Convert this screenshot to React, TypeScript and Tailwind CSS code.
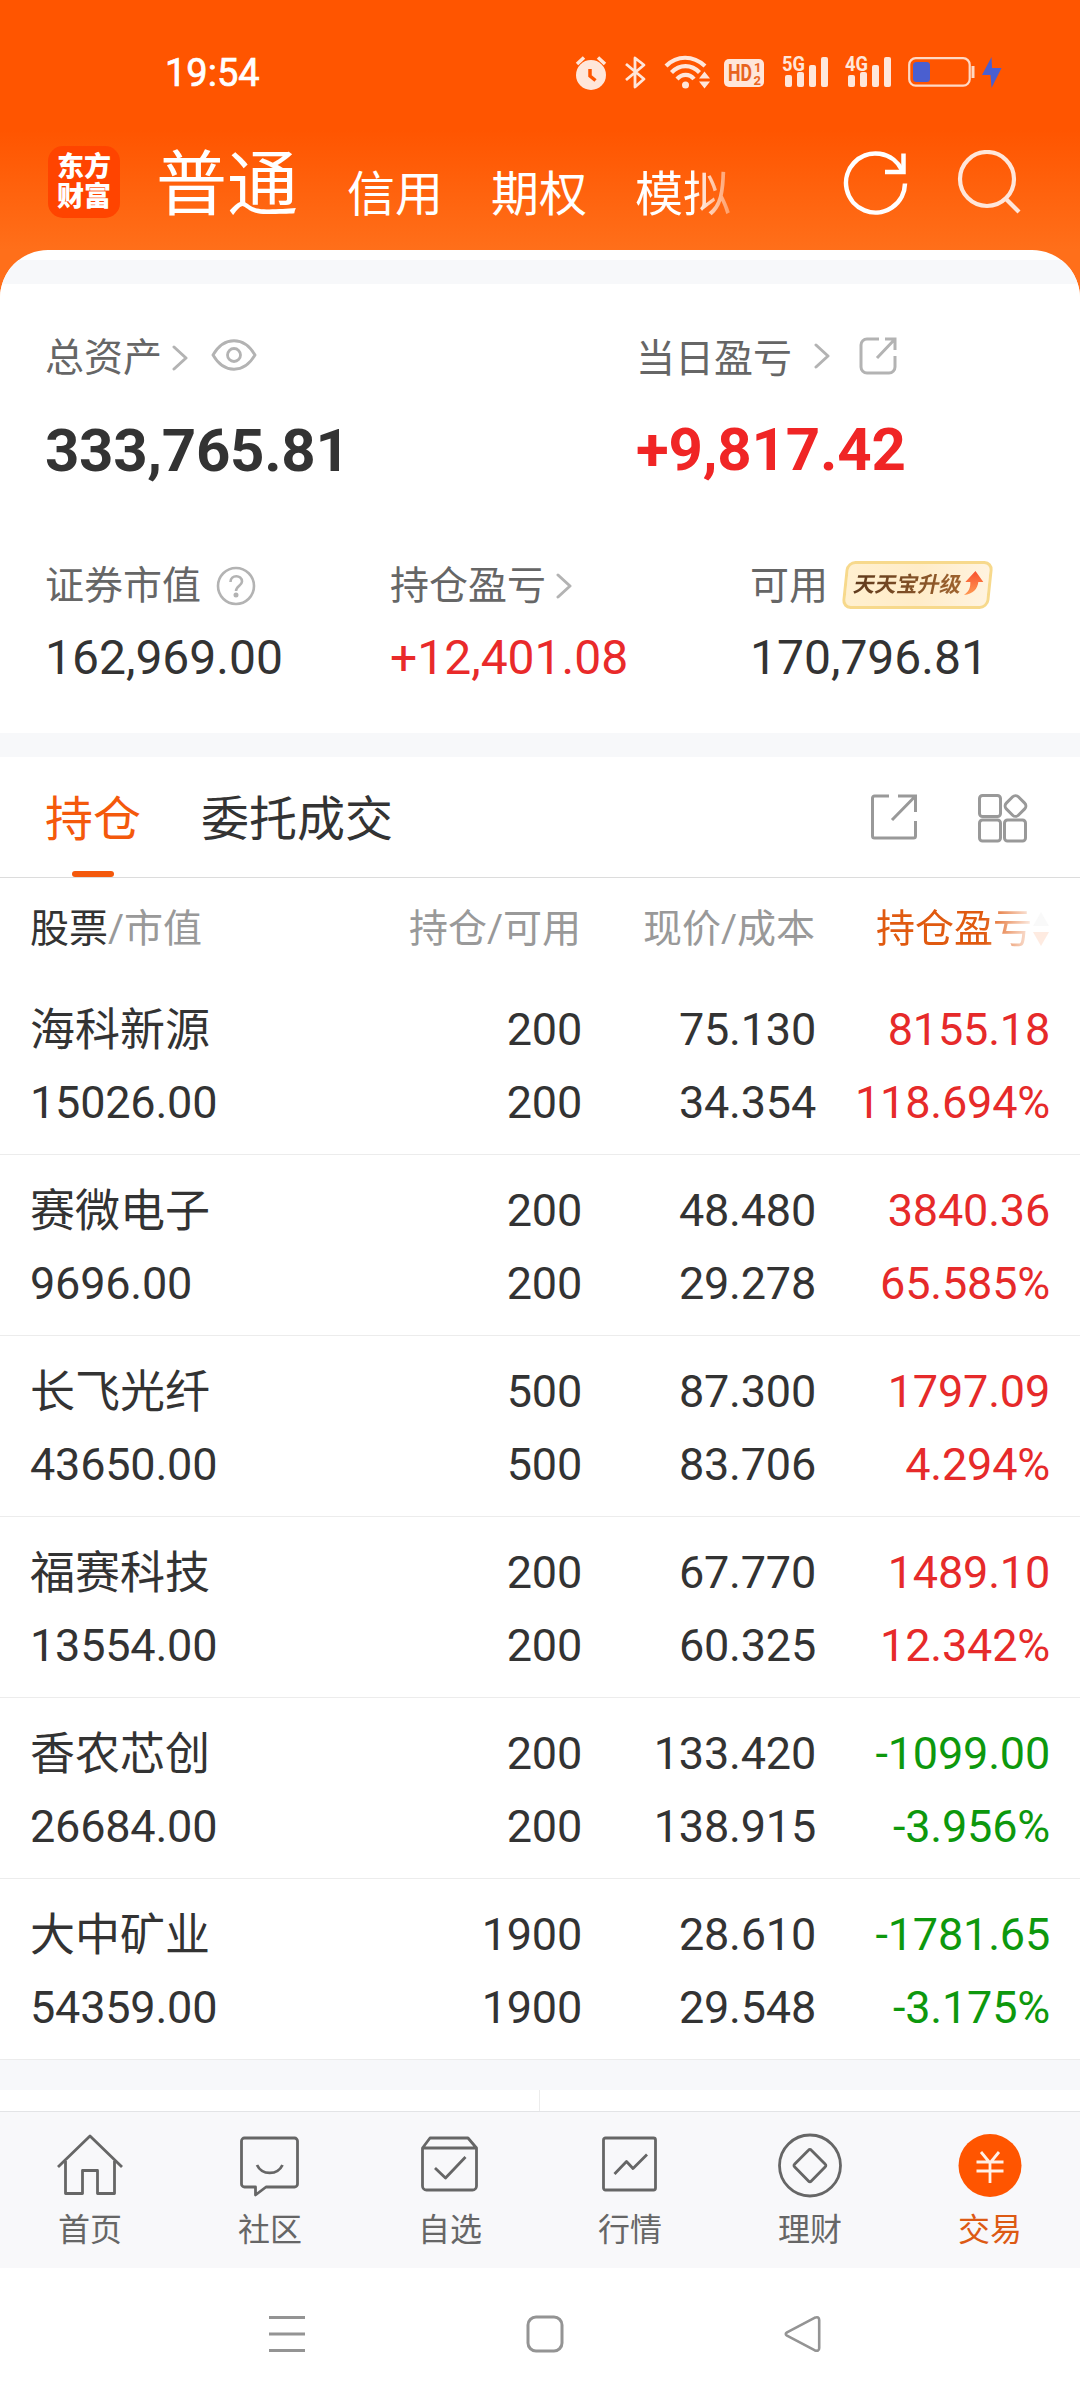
import React from 'react';
import clsx from 'clsx';

const holdings = [
  { name: '海科新源', value: '15026.00', qty: '200', available: '200', price: '75.130', cost: '34.354', profit: '8155.18', rate: '118.694%' },
  { name: '赛微电子', value: '9696.00', qty: '200', available: '200', price: '48.480', cost: '29.278', profit: '3840.36', rate: '65.585%' },
  { name: '长飞光纤', value: '43650.00', qty: '500', available: '500', price: '87.300', cost: '83.706', profit: '1797.09', rate: '4.294%' },
  { name: '福赛科技', value: '13554.00', qty: '200', available: '200', price: '67.770', cost: '60.325', profit: '1489.10', rate: '12.342%' },
  { name: '香农芯创', value: '26684.00', qty: '200', available: '200', price: '133.420', cost: '138.915', profit: '-1099.00', rate: '-3.956%' },
  { name: '大中矿业', value: '54359.00', qty: '1900', available: '1900', price: '28.610', cost: '29.548', profit: '-1781.65', rate: '-3.175%' },
];

function Chevron({ className }: { className?: string }) {
  return (
    <svg width="16" height="26" viewBox="0 0 16 26" fill="none" stroke="#b3b3b3" strokeWidth="3" strokeLinecap="round" strokeLinejoin="round" className={className}>
      <path d="M2 2 14 13 2 24" />
    </svg>
  );
}

function Signal({ label, className }: { label: string; className?: string }) {
  return (
    <svg width="48" height="44" viewBox="0 -10 48 44" fill="#ffe6da" className={clsx('-mt-[10px]', className)}>
      <text x="0" y="16.500" fontSize="21" fontWeight="700" textLength="23" lengthAdjust="spacingAndGlyphs">{label}</text>
      <rect x="3" y="21" width="7" height="12" rx="2" />
      <rect x="15" y="18" width="7" height="15" rx="2" />
      <rect x="27" y="11" width="7" height="22" rx="2" />
      <rect x="39" y="3" width="7" height="30" rx="2" />
    </svg>
  );
}

function StatusBar() {
  return (
    <div className="flex h-[144px] items-start pl-[165px] pt-[54px]">
      <span className="mt-px w-[410px] text-[38px] leading-[37px] text-white [-webkit-text-stroke:0.7px_#fff]">19:54</span>
      <svg width="32" height="36" viewBox="0 0 32 36" fill="none">
        <circle cx="16" cy="21" r="15" fill="#ffe6da" />
        <path d="M2 10 9 3.500M23 3.500 30 10" stroke="#ffe6da" strokeWidth="3.500" />
        <path d="M15 15v7l5.500 4.500" stroke="#ff5500" strokeWidth="3.500" />
      </svg>
      <svg width="22" height="36" viewBox="0 0 22 36" fill="none" stroke="#ffe6da" strokeWidth="2.800" strokeLinejoin="round" className="ml-[18px]">
        <path d="m1 10 18 15-9 8V4l9 7L1 26" />
      </svg>
      <svg width="46" height="36" viewBox="0 0 46 36" fill="none" stroke="#ffe6da" strokeWidth="4.200" className="ml-[17px]">
        <path d="M2 12c11-11 27-11 39 0M7.500 18.500c8-8.500 20-8.500 28 0M13 25c5-5.500 12.500-5.500 17 0" />
        <circle cx="21.500" cy="31" r="3.500" fill="#ffe6da" stroke="none" />
        <path d="m35 24.500 5.500-7 5.500 7zM35 27.500h11l-5.500 7z" fill="#ffe6da" stroke="none" />
      </svg>
      <svg width="40" height="36" viewBox="0 0 40 36" className="ml-[14px]">
        <rect y="5" width="40" height="28" rx="5" fill="#ffe6da" />
        <text x="4" y="27" fontSize="23" fontWeight="700" fill="#e8641e" textLength="24" lengthAdjust="spacingAndGlyphs">HD</text>
        <text x="30" y="18" fontSize="13" fontWeight="700" fill="#e8641e">1</text>
        <text x="29.500" y="31" fontSize="13" fontWeight="700" fill="#e8641e">2</text>
      </svg>
      <Signal label="5G" className="ml-[18px]" />
      <Signal label="4G" className="ml-[15px]" />
      <svg width="67" height="34" viewBox="0 0 67 34" fill="none" className="ml-[15px]">
        <rect x="1.200" y="4.200" width="60.500" height="27.500" rx="6.500" stroke="#ffd9c4" strokeWidth="2.200" />
        <rect x="5" y="8" width="17" height="20" rx="3.500" fill="#4a5fd0" />
        <path d="M65 12v12" stroke="#ffd9c4" strokeWidth="3" />
      </svg>
      <svg width="20" height="36" viewBox="0 0 20 36" fill="#4a5fd0" className="ml-[7px]">
        <path d="M9.500 3 0 21h8.500l1 13L19.500 14H10z" />
      </svg>
    </div>
  );
}

function Header() {
  return (
    <header className="h-[300px] bg-[linear-gradient(to_bottom,#ff5500_0px,#ff5500_130px,#ff6f1a_250px)]">
      <StatusBar />
      <div className="flex items-start pl-[48px] text-white">
        <div className="mt-[2px] flex h-[72px] w-[72px] flex-col items-center justify-center rounded-[15px] bg-[#ff4400] text-[27px] font-black leading-[30px]">
          <span>东方</span>
          <span>财富</span>
        </div>
        <div className="ml-[36px] flex h-[80px] w-[591px] items-start text-[48px] leading-[60px]">
          <span className="mt-[3px] text-[71px] leading-[76px]">普通</span>
          <span className="ml-[49px] mt-[21px]">信用</span>
          <span className="ml-[48px] mt-[21px]">期权</span>
          <span className="ml-[48px] mt-[21px] [mask-image:linear-gradient(to_right,black_60%,rgba(0,0,0,0.35)_100%)]">模拟</span>
        </div>
        <svg width="66" height="66" viewBox="0 0 66 66" fill="none" stroke="#fff" strokeWidth="4.500" className="ml-[96px] mt-[6px]">
          <path d="M62 33.500A29.500 29.500 0 1 1 59 20" />
          <path d="M60.500 3.500v18.500H42" />
        </svg>
        <svg width="66" height="66" viewBox="0 0 66 66" fill="none" stroke="#ffe6da" strokeWidth="4.200" className="ml-[47px] mt-[6px]">
          <circle cx="31" cy="29" r="27" />
          <path d="M49 48l14 14" />
        </svg>
      </div>
    </header>
  );
}

function Summary() {
  return (
    <section className="h-[449px] bg-white pl-[45px] pt-[45px] text-[39px] text-[#666]">
      <div className="grid grid-cols-[591px_1fr]">
        <div>
          <div className="flex h-[58px] items-center leading-[58px]">
            <span className="-mt-px">总资产</span>
            <Chevron className="-mt-px ml-[10px]" />
            <svg width="46" height="32" viewBox="0 0 46 32" fill="none" stroke="#b3b3b3" strokeWidth="2.800" className="-mt-[6px] ml-[23px]">
              <path d="M2 16C13-3 33-3 44 16 33 35 13 35 2 16Z" />
              <circle cx="23" cy="16" r="6.500" />
            </svg>
          </div>
          <div className="mt-[30px] text-[60px] font-bold leading-[68px] tracking-[-0.3px] text-[#333]">333,765.81</div>
        </div>
        <div>
          <div className="flex h-[58px] items-center leading-[58px]">
            <span className="mt-px">当日盈亏</span>
            <Chevron className="-mt-[5px] ml-[22px]" />
            <svg width="38" height="38" viewBox="0 0 38 38" fill="none" stroke="#b3b3b3" strokeWidth="3" className="-mt-[4px] ml-[29px]">
              <path d="M20 2H8a6 6 0 0 0-6 6v22a6 6 0 0 0 6 6h22a6 6 0 0 0 6-6V19" />
              <path d="M26 2h10v11M36 2 18 21" />
            </svg>
          </div>
          <div className="mt-[29px] text-[60px] font-bold leading-[68px] tracking-[-0.2px] text-[#f02525]">+9,817.42</div>
        </div>
      </div>
      <div className="mt-[76px] grid grid-cols-[345px_360px_1fr]">
        <div>
          <div className="flex h-[50px] items-center leading-[50px]">
            <span>证券市值</span>
            <svg width="40" height="40" viewBox="0 0 40 40" fill="none" stroke="#b3b3b3" strokeWidth="2.600" className="-mt-px ml-[15px]">
              <circle cx="20" cy="20" r="18" />
              <path d="M14.500 16c0-7.500 11.500-7.500 11.500-.5 0 4-6 4.500-6 9.500" />
              <circle cx="20" cy="29" r="1.200" fill="#b3b3b3" />
            </svg>
          </div>
          <div className="mt-[19px] text-[48px] leading-[56px] text-[#333]">162,969.00</div>
        </div>
        <div>
          <div className="flex h-[50px] items-center leading-[50px]">
            <span>持仓盈亏</span>
            <Chevron className="ml-[10px]" />
          </div>
          <div className="mt-[19px] text-[48px] leading-[56px] text-[#e92a2a]">+12,401.08</div>
        </div>
        <div>
          <div className="flex h-[50px] items-center leading-[50px]">
            <span>可用</span>
            <div className="-mt-[2px] ml-[16px] flex h-[48px] w-[147px] -skew-x-6 items-center rounded-[9px] border-[3px] border-[#f7d98c] bg-linear-to-r from-[#fff0d0] via-[#ffecc8] to-[#fff3df] pl-[7px]">
              <span className="-skew-x-6 bg-linear-to-r from-[#5f3a1c] to-[#a0642f] bg-clip-text text-[21.5px] font-bold leading-[30px] text-transparent">天天宝升级</span>
              <svg width="22" height="28" viewBox="0 0 22 28" className="-mt-[4px] ml-px">
                <defs>
                  <linearGradient id="rise" x1="0" y1="0" x2="0" y2="1">
                    <stop offset="0" stopColor="#f8502e" />
                    <stop offset="1" stopColor="#ff9a52" />
                  </linearGradient>
                </defs>
                <path d="M11 2 20 13h-5c0 7-4 12-13 13 4-3 6-7 5-13H2z" fill="url(#rise)" />
              </svg>
            </div>
          </div>
          <div className="mt-[19px] text-[48px] leading-[56px] text-[#333]">170,796.81</div>
        </div>
      </div>
    </section>
  );
}

function Tabs() {
  return (
    <div className="flex h-[121px] items-start border-b border-[#dcdcdc] bg-white pl-[45px] text-[48px] leading-[60px]">
      <div className="flex h-[120px] flex-col items-center justify-between pt-[33px] text-[#f4590c]">
        <span>持仓</span>
        <span className="h-[6px] w-[42px] rounded-full bg-[#f4590c]" />
      </div>
      <span className="ml-[60px] pt-[33px] text-[#333]">委托成交</span>
      <svg width="48" height="48" viewBox="0 0 48 48" fill="none" stroke="#999" strokeWidth="3" className="ml-[477px] mt-[36px]">
        <path d="M19 3H4.500a2 2 0 0 0-2 2v38a2 2 0 0 0 2 2h39a2 2 0 0 0 2-2V28" />
        <path d="M28 3h17.500v16M45 3.500 22 27" />
      </svg>
      <svg width="52" height="50" viewBox="0 0 52 50" fill="none" stroke="#999" strokeWidth="3" className="ml-[59px] mt-[36px]">
        <rect x="2.500" y="2.500" width="21" height="21" rx="3" />
        <rect x="2.500" y="27" width="21" height="21" rx="3" />
        <rect x="27.500" y="27" width="21" height="21" rx="3" />
        <rect x="30" y="4.500" width="17" height="17" rx="4" transform="rotate(45 38.500 13)" />
      </svg>
    </div>
  );
}

function HoldingsTable() {
  return (
    <section className="bg-white text-[#333]">
      <div className="grid h-[96px] grid-cols-[318px_233px_234px_235px] px-[30px] pt-[21px] text-[39px] leading-[60px] text-[#999]">
        <div>
          <span className="text-[#333]">股票</span>/市值
        </div>
        <div className="text-right">持仓/可用</div>
        <div className="text-right">现价/成本</div>
        <div className="flex h-[60px] items-center justify-end [mask-image:linear-gradient(to_right,black_72%,rgba(0,0,0,0.12)_92%)]">
          <span className="text-[#e05a10]">持仓盈亏</span>
          <svg width="18" height="38" viewBox="0 0 18 38" className="-mt-px">
            <path d="M9 2l8 14H1z" fill="#ccc" />
            <path d="M9 36l8-14H1z" fill="#f4590c" />
          </svg>
        </div>
      </div>
      {holdings.map((item) => (
        <div
          key={item.name}
          className="grid h-[181px] grid-cols-[318px_234px_234px_234px] border-b border-[#ececec] px-[30px] pt-[19px] text-[45px] leading-[73px] tracking-[-0.2px]"
        >
          <div className="flex flex-col">
            <span className="h-[73px] pt-px tracking-normal">{item.name}</span>
            <span>{item.value}</span>
          </div>
          <div className="flex flex-col text-right">
            <span>{item.qty}</span>
            <span>{item.available}</span>
          </div>
          <div className="flex flex-col text-right">
            <span>{item.price}</span>
            <span>{item.cost}</span>
          </div>
          <div className={clsx('flex flex-col text-right', item.profit.startsWith('-') ? 'text-[#0d980d]' : 'text-[#e62a2a]')}>
            <span>{item.profit}</span>
            <span>{item.rate}</span>
          </div>
        </div>
      ))}
    </section>
  );
}

const tabItems = [
  {
    label: '首页',
    icon: (
      <>
        <path d="M3 34 35 3l32 31" />
        <path d="M10.500 28v32.500h17V37.500h15v23h17V28" />
      </>
    ),
  },
  {
    label: '社区',
    icon: (
      <>
        <path d="M9.500 5h50a3 3 0 0 1 3 3v43a3 3 0 0 1-3 3H31l-10.500 8v-8h-11a3 3 0 0 1-3-3V8a3 3 0 0 1 3-3z" />
        <path d="M22 32c5 10.500 20.500 10.500 25.500 0" />
      </>
    ),
  },
  {
    label: '自选',
    icon: (
      <>
        <path d="M7.500 15 15 5h38l8.500 10v38a4 4 0 0 1-4 4h-46a4 4 0 0 1-4-4zM7.500 15h54" />
        <path d="m20 35 10.500 10 20-21" />
      </>
    ),
  },
  {
    label: '行情',
    icon: (
      <>
        <rect x="8.500" y="5" width="52" height="52" rx="2" />
        <path d="m19.500 41 12-12.500L38 35.500l14-14" />
      </>
    ),
  },
  {
    label: '理财',
    icon: (
      <>
        <circle cx="35" cy="32.500" r="30.500" />
        <path d="M33.700 17 19.500 31.300a1.600 1.600 0 0 0 0 2.400l14.200 14.500a1.600 1.600 0 0 0 2.400 0l14.200-14.500a1.600 1.600 0 0 0 0-2.400L36.100 17a1.600 1.600 0 0 0-2.400 0z" />
      </>
    ),
  },
  {
    label: '交易',
    active: true,
    icon: (
      <>
        <circle cx="35" cy="32.500" r="31.500" fill="#ff5500" stroke="none" />
        <path d="m26 19 9 11 9-11M35 30v20M21.500 29h27M21.500 38h27" stroke="#fff0e6" />
      </>
    ),
  },
];

function TabBar() {
  return (
    <nav className="grid h-[157px] grid-cols-6 border-t border-[#e3e4e6] bg-[#f8f8fa] pt-[21px]">
      {tabItems.map((tab) => (
        <div key={tab.label} className={clsx('flex flex-col items-center text-[32px] leading-[40px]', tab.active ? 'text-[#dd5a14]' : 'text-[#666]')}>
          <svg width="70" height="66" viewBox="0 0 70 66" fill="none" stroke="#666" strokeWidth="2.800" strokeLinejoin="round">
            {tab.icon}
          </svg>
          <span className="mt-[11px]">{tab.label}</span>
        </div>
      ))}
    </nav>
  );
}

function SystemNav() {
  return (
    <div className="flex h-[132px] items-start bg-white pl-[268px] pt-[47px]">
      <svg width="38" height="38" viewBox="0 0 38 38" stroke="#949494" strokeWidth="3">
        <path d="M1 2.500h36M1 19h36M1 35.500h36" />
      </svg>
      <svg width="38" height="38" viewBox="0 0 38 38" fill="none" stroke="#949494" strokeWidth="3" className="ml-[220px]">
        <rect x="2" y="2" width="34" height="34" rx="8" />
      </svg>
      <svg width="38" height="38" viewBox="0 0 38 38" fill="none" stroke="#949494" strokeWidth="2.600" strokeLinejoin="round" className="ml-[220px]">
        <path d="M3 17.300 30.500 2.800Q35.200 1 35.200 5v28Q35.200 37 30.500 35.200L3 20.700Q.5 19 3 17.300z" />
      </svg>
    </div>
  );
}

export default function App() {
  return (
    <div className="h-[2400px] w-[1080px] overflow-hidden bg-white font-['Roboto','Noto_Sans_CJK_SC',sans-serif]">
      <Header />
      <main className="-mt-[50px] overflow-hidden rounded-t-[48px] bg-white pt-[10px]">
        <div className="h-[24px] bg-[#f7f8fa]" />
        <Summary />
        <div className="h-[24px] bg-[#f7f8fa]" />
        <Tabs />
        <HoldingsTable />
        <div className="h-[30px] bg-[#f7f8fa]" />
        <div className="flex h-[21px]">
          <div className="w-[540px] border-r border-[#ececec]" />
        </div>
      </main>
      <TabBar />
      <SystemNav />
    </div>
  );
}
